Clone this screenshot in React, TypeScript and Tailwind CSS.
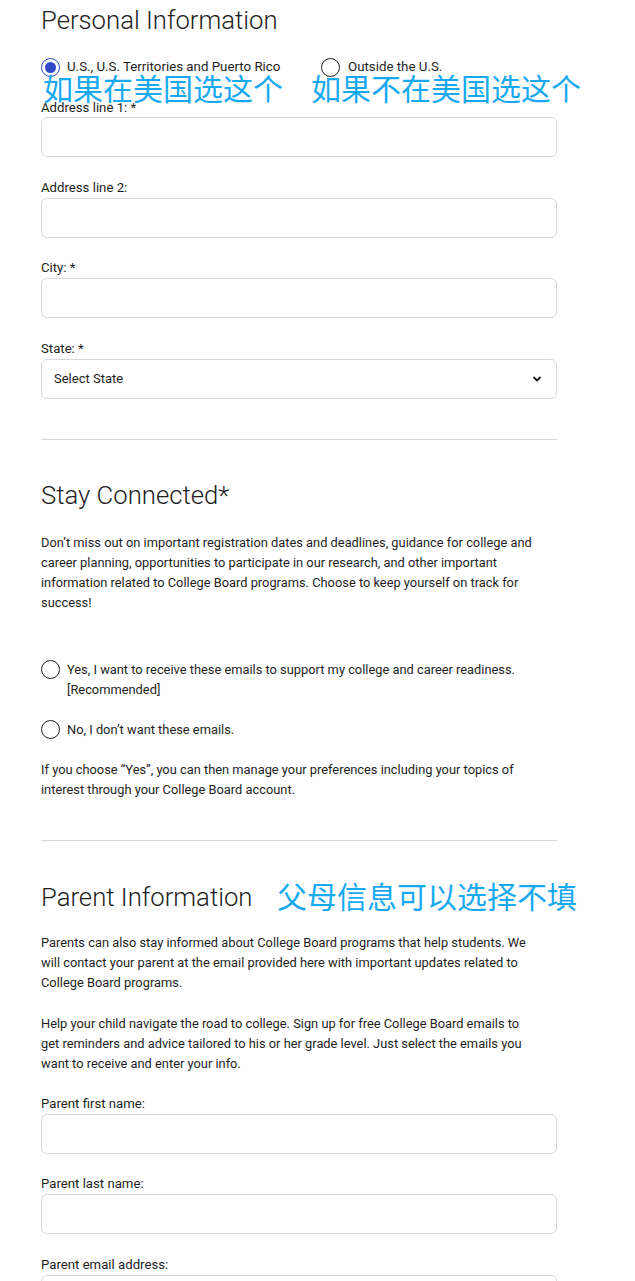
import React from "react";

const font = { fontFamily: "Roboto, 'Liberation Sans', sans-serif" };

function Radio({ checked = false }: { checked?: boolean }) {
  return checked ? (
    <span className="flex h-[19px] w-[19px] shrink-0 items-center justify-center rounded-full border-[1.5px] border-[#3049c9] bg-white">
      <span className="h-[11px] w-[11px] rounded-full bg-[#3049c9]" />
    </span>
  ) : (
    <span className="block h-[19px] w-[19px] shrink-0 rounded-full border-[1.5px] border-[#1e1e1e] bg-white" />
  );
}

function Field({ label, select = false, tight = false }: { label: string; select?: boolean; tight?: boolean }) {
  return (
    <div className="mb-[20.5px]">
      <div className={`text-[13.2px] text-[#1e1e1e] ${tight ? "leading-[19px]" : "leading-5"}`}>{label}</div>
      <div className="flex h-10 w-full items-center justify-between rounded-[6px] border border-[#d9d9d9] bg-white px-[12px]">
        {select && (
          <>
            <span className="text-[13px] text-[#1e1e1e]">Select State</span>
            <svg width="10" height="8" viewBox="0 0 10 8" className="mr-[2px]">
              <path d="M2 2.5 L5 5.5 L8 2.5" stroke="#1e1e1e" strokeWidth="1.8" fill="none" strokeLinecap="round" strokeLinejoin="round" />
            </svg>
          </>
        )}
      </div>
    </div>
  );
}

const annot = "absolute text-[30px] leading-none text-[#19a9f2] whitespace-nowrap";
const cjk = { fontFamily: "'Noto Sans CJK SC', sans-serif" };
const para = "text-[12.85px] leading-5";

export default function App() {
  return (
    <div className="relative min-h-[1281px] w-[635px] bg-white text-[#1e1e1e]" style={font}>
      <div className="w-[516px] ml-[41px] pt-[5px]">
        <h1 className="text-[25.7px] font-light leading-[30px] text-[#1e1e1e]">Personal Information</h1>

        <div className="mt-[22px] flex h-5 items-center text-[13.3px]">
          <div className="flex w-[280px] items-center gap-[7px]">
            <Radio checked />
            <span>U.S., U.S. Territories and Puerto Rico</span>
          </div>
          <div className="flex items-center gap-[8px]">
            <Radio />
            <span>Outside the U.S.</span>
          </div>
        </div>

        <div className="mt-[21px]">
          <Field label="Address line 1: *" tight />
          <Field label="Address line 2:" />
          <Field label="City: *" />
          <Field label="State: *" select />
        </div>

        <div className="mt-10 h-px bg-[#d9d9d9]" />

        <h2 className="mt-10 text-[25.7px] font-light leading-[30px]">Stay Connected*</h2>
        <p className={`mt-[23px] ${para}`}>
          Don’t miss out on important registration dates and deadlines, guidance for college and
          <br />
          career planning, opportunities to participate in our research, and other important
          <br />
          information related to College Board programs. Choose to keep yourself on track for
          <br />
          success!
        </p>

        <div className={`mt-[47px] flex items-start gap-[7px] ${para}`}>
          <span className="mt-[0.5px]"><Radio /></span>
          <span>
            Yes, I want to receive these emails to support my college and career readiness.
            <br />
            [Recommended]
          </span>
        </div>
        <div className={`mt-5 flex items-start gap-[7px] ${para}`}>
          <span className="mt-[0.5px]"><Radio /></span>
          <span>No, I don’t want these emails.</span>
        </div>

        <p className={`mt-5 ${para}`}>
          If you choose “Yes”, you can then manage your preferences including your topics of
          <br />
          interest through your College Board account.
        </p>

        <div className="mt-10 h-px bg-[#d9d9d9]" />

        <h2 className="mt-[41px] text-[25.7px] font-light leading-[30px]">Parent Information</h2>
        <p className={`mt-[21px] ${para}`}>
          Parents can also stay informed about College Board programs that help students. We
          <br />
          will contact your parent at the email provided here with important updates related to
          <br />
          College Board programs.
        </p>
        <p className={`mt-[21px] ${para}`}>
          Help your child navigate the road to college. Sign up for free College Board emails to
          <br />
          get reminders and advice tailored to his or her grade level. Just select the emails you
          <br />
          want to receive and enter your info.
        </p>

        <div className="mt-5">
          <Field label="Parent first name:" />
          <Field label="Parent last name:" />
          <Field label="Parent email address:" />
        </div>
      </div>

      <div className={annot} style={{ ...cjk, left: 43, top: 72 }}>如果在美国选这个</div>
      <div className={annot} style={{ ...cjk, left: 311, top: 72 }}>如果不在美国选这个</div>
      <div className={annot} style={{ ...cjk, left: 277, top: 880 }}>父母信息可以选择不填</div>
    </div>
  );
}
